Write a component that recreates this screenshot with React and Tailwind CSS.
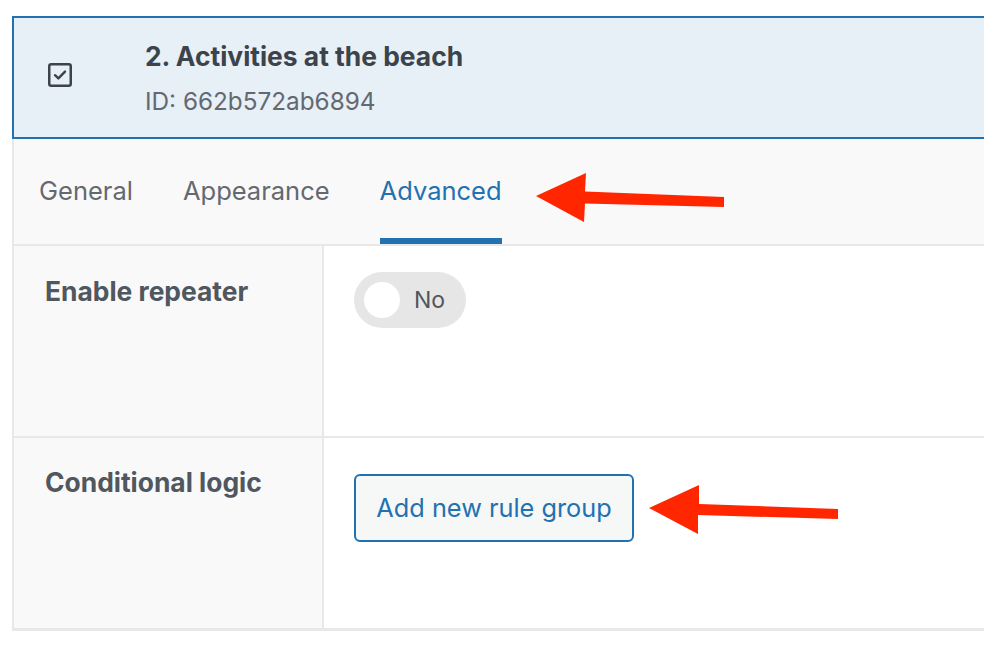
import React from "react";

function CheckIcon() {
  return (
    <svg width="24" height="24" viewBox="0 0 24 24" className="block">
      <rect x="1.25" y="1.25" width="21.5" height="21.5" rx="2" fill="none" stroke="#3c434a" strokeWidth="2.5" />
      <path d="M7 12.2 L10.4 15.4 L17 8.6" fill="none" stroke="#3c434a" strokeWidth="2.4" strokeLinecap="round" strokeLinejoin="round" />
    </svg>
  );
}

function Arrows() {
  return (
    <svg className="absolute left-0 top-0 pointer-events-none" width="984" height="648" viewBox="0 0 984 648">
      <polygon
        fill="#ff2600"
        points="536,196 586,173 585,191.5 724,197 724,207 585,203.5 584,222"
      />
      <polygon
        fill="#ff2600"
        points="649,508 699,485 699,504 838,509 838,519 698,515 698,534"
      />
    </svg>
  );
}

export default function App() {
  return (
    <div
      className="relative w-[984px] h-[648px] overflow-hidden bg-white pt-[16px] pl-[12px]"
      style={{ fontFamily: "Inter, 'Noto Sans', sans-serif" }}
    >
      {/* Header */}
      <div className="flex items-start h-[123px] border-2 border-r-0 border-[#2271b1] bg-[#e7eff7]">
        <div className="pl-[34px] pr-[73px] pt-[45px]">
          <CheckIcon />
        </div>
        <div className="flex flex-col pt-[23px]">
          <div className="text-[26.4px] leading-[30px] font-bold text-[#3c434a]">
            2. Activities at the beach
          </div>
          <div className="mt-[16px] text-[24.3px] leading-[28px] text-[#646970]">ID: 662b572ab6894</div>
        </div>
      </div>

      {/* Tabs */}
      <div className="flex items-end h-[107px] bg-[#f9f9f9] border-l-2 border-b-2 border-[#e8e8e8] pl-[25px] gap-[50px]">
        <div className="h-[104px] flex items-center pb-[2px] text-[25.5px] text-[#646970]">General</div>
        <div className="h-[104px] flex items-center pb-[2px] text-[25.5px] text-[#646970]">Appearance</div>
        <div className="h-[104px] flex items-center pt-[4px] text-[25.5px] text-[#2271b1] border-b-[6px] border-[#2271b1]">
          Advanced
        </div>
      </div>

      {/* Row 1 */}
      <div className="flex h-[192px] border-l-2 border-b-2 border-[#e8e8e8]">
        <div className="w-[310px] shrink-0 bg-[#f9f9f9] border-r-2 border-[#e8e8e8] pl-[31px] pt-[29px]">
          <div className="text-[26.4px] leading-[32px] font-bold text-[#50575e]">Enable repeater</div>
        </div>
        <div className="flex-1 bg-white pl-[30px] pt-[26px]">
          <div className="flex items-center w-[112px] h-[56px] rounded-full bg-[#e6e6e6] pl-[10px]">
            <div className="w-[36px] h-[36px] rounded-full bg-white" />
            <span className="ml-[14px] text-[23px] text-[#50575e]">No</span>
          </div>
        </div>
      </div>

      {/* Row 2 */}
      <div className="flex h-[193px] border-l-2 border-b-[3px] border-[#e8e8e8]">
        <div className="w-[310px] shrink-0 bg-[#f9f9f9] border-r-2 border-[#e8e8e8] pl-[31px] pt-[28px]">
          <div className="text-[26.4px] leading-[32px] font-bold text-[#50575e]">Conditional logic</div>
        </div>
        <div className="flex-1 bg-white pl-[30px] pt-[36px]">
          <button className="flex items-center justify-center w-[280px] h-[68px] rounded-[6px] border-2 border-[#2271b1] bg-[#f6f7f7] text-[25.3px] text-[#2271b1]">
            Add new rule group
          </button>
        </div>
      </div>

      <Arrows />
    </div>
  );
}
